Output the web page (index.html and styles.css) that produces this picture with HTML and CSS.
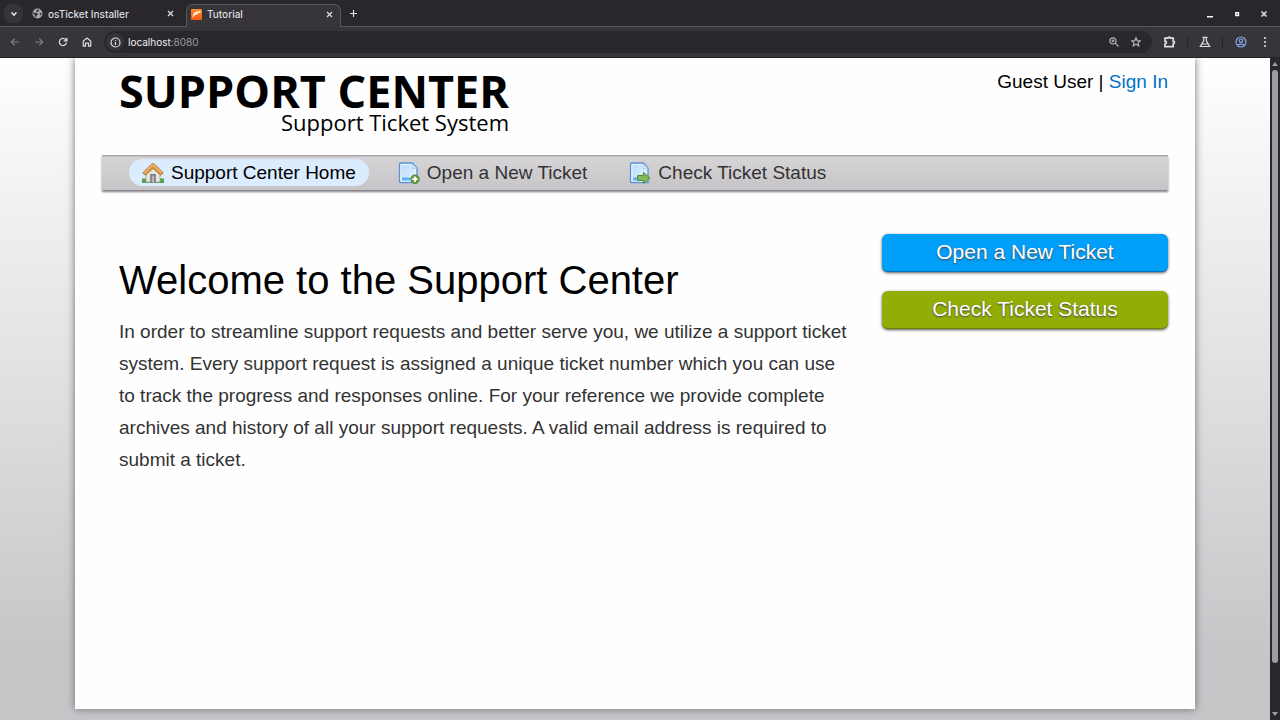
FILE: index.html
```html
<!DOCTYPE html>
<html lang="en">
<head>
<meta charset="utf-8">
<title>Tutorial</title>
<link rel="stylesheet" href="styles.css">
</head>
<body>
<div class="browser">
  <header class="tabstrip">
    <button class="tab-search" aria-label="Search tabs"><svg width="8" height="8" viewBox="0 0 8 8"><path d="M1.500 2.500 4 5l2.500-2.500" class="line bold"/></svg></button>
    <div class="tab">
      <svg width="11" height="11" viewBox="0 0 11 11"><circle cx="5.500" cy="5.500" r="5" fill="#a4a7b1"/><path d="M1.200 4.200 3.500 5l2 .2.500 1.300-1.500 1-.5 1.700-1-.4-.5-2.300-1.500-1zM5.200 1.500l2 .5-.4 1.300-1.400.2-.5.8-1-.5zM7.500 5.200l1.800-.5.200 1.800-1 1z" fill="#343237"/></svg>
      <span class="tab-title">osTicket Installer</span>
      <button class="tab-close" aria-label="Close osTicket Installer"><svg width="7" height="7" viewBox="0 0 7 7"><path d="m1 1 5 5M6 1 1 6" class="line"/></svg></button>
    </div>
    <div class="tab active">
      <svg width="11" height="11" viewBox="0 0 11 11"><defs><linearGradient id="fav" x2="0" y2="1"><stop stop-color="#ff8b2d"/><stop offset="1" stop-color="#f25a12"/></linearGradient></defs><rect width="11" height="11" rx="1" fill="url(#fav)"/><path d="M1.500 9C1.500 5.500 2.500 3.500 5 2.700L9.500 1.700 9.700 3.500 7.500 4.200 6.300 4.300 6.500 5.500 4.500 5.700C3 6.200 2.500 7.500 1.500 9z" fill="#fff0df"/></svg>
      <span class="tab-title">Tutorial</span>
      <button class="tab-close" aria-label="Close Tutorial"><svg width="7" height="7" viewBox="0 0 7 7"><path d="m1 1 5 5M6 1 1 6" class="line"/></svg></button>
    </div>
    <button class="new-tab" aria-label="New tab"><svg width="9" height="9" viewBox="0 0 9 9"><path d="M4.500 1v7M1 4.500h7" class="line"/></svg></button>
    <div class="window-controls">
      <button aria-label="Minimize"><svg width="8" height="8" viewBox="0 0 8 8"><path d="M1 6h6v1.500H1z" fill="#fff"/></svg></button>
      <button aria-label="Maximize"><svg width="8" height="8" viewBox="0 0 8 8"><path d="M2.800 2.800h2.700v2.700H2.800z" fill="none" stroke="#fff" stroke-width="1.400"/></svg></button>
      <button aria-label="Close window"><svg width="8" height="8" viewBox="0 0 8 8"><path d="m1.500 1.500 5 5m0-5-5 5" class="line bold"/></svg></button>
    </div>
  </header>
  <nav class="toolbar" aria-label="Browser">
    <div class="history">
      <button class="dim" aria-label="Back"><svg width="10" height="10" viewBox="0 0 10 10"><path d="M9 5H1.500M4.700 1.700 1.400 5l3.300 3.300" class="line"/></svg></button>
      <button class="dim" aria-label="Forward"><svg width="10" height="10" viewBox="0 0 10 10"><path d="M1 5h7.500M5.300 1.700 8.600 5 5.300 8.300" class="line"/></svg></button>
      <button aria-label="Reload"><svg width="10" height="10" viewBox="0 0 10 10"><path d="M8.500 5.600A3.600 3.600 0 1 1 7.800 2.700L8.700 3.700M8.800.8v3.100H5.700" class="line"/></svg></button>
      <button aria-label="Home"><svg width="10" height="10" viewBox="0 0 10 10"><path d="M1.300 9.200V4.100L5 1l3.700 3.100v5.100H6.500V6.200h-3v3z" class="line"/></svg></button>
    </div>
    <div class="address">
      <button class="site-info" aria-label="Site information"><svg width="11" height="11" viewBox="0 0 11 11"><circle cx="5.500" cy="5.500" r="4.500" class="line"/><path d="M5.500 5v3M5.500 2.900v1.200" class="line"/></svg></button>
      <a class="url" href="#">localhost<span>:8080</span></a>
      <button aria-label="Zoom"><svg width="10" height="10" viewBox="0 0 10 10"><circle cx="3.900" cy="3.900" r="3.100" class="line"/><path d="m6.200 6.200 3.300 3.300M3.900 2.500v2.800M2.500 3.900h2.800" class="line"/></svg></button>
      <button aria-label="Bookmark"><svg width="10" height="10" viewBox="0 0 10 10"><path d="m5 .8 1.200 2.800 3.100.3-2.300 2 .7 3L5 7.300 2.300 8.900l.7-3-2.300-2 3.100-.3z" class="line"/></svg></button>
    </div>
    <div class="tools">
      <button aria-label="Extensions"><svg width="12" height="12" viewBox="0 0 12 12"><path d="M1 2.200h3a1.200 1.200 0 0 1 2.400 0h2.800v2.900a1.300 1.300 0 0 1 0 2.600v3H1V7.900a1.300 1.300 0 0 0 0-2.800z" class="line bold"/></svg></button>
      <i></i>
      <button aria-label="Labs"><svg width="12" height="12" viewBox="0 0 12 12"><path d="M3.500 1.300h5M4.700 1.300v3.500L1.300 10.500h9.400L7.300 4.800V1.300M3 8h6" class="line"/></svg></button>
      <i></i>
      <button class="profile" aria-label="Profile"><svg width="12" height="12" viewBox="0 0 12 12"><circle cx="6" cy="6" r="5" class="line"/><circle cx="6" cy="4.700" r="1.700" class="line"/><path d="M2.500 9.300Q6 6.800 9.500 9.300" class="line"/></svg></button>
      <button aria-label="Menu"><svg width="4" height="12" viewBox="0 0 4 12"><g fill="#dedde0"><circle cx="2" cy="2" r="1.100"/><circle cx="2" cy="6" r="1.100"/><circle cx="2" cy="10" r="1.100"/></g></svg></button>
    </div>
  </nav>
  <div class="viewport">
    <div class="page">
      <div class="container">
        <header class="site-header">
          <a class="logo" href="#"><span class="logo-name">SUPPORT CENTER</span><span class="logo-tag">Support Ticket System</span></a>
          <p class="user">Guest User | <a href="#">Sign In</a></p>
        </header>
        <nav class="site-nav" aria-label="Support center">
          <a class="current" href="#"><svg width="22" height="20" viewBox="0 0 22 20"><path d="M0 16.500q1-2 3-1l16 0q2-1 3 1V20H0z" fill="#52a248"/><path d="M4 9 11 3l7 6v10H4z" fill="#e8e5df" stroke="#a7a39d" stroke-width=".7"/><path d="M8.200 11h5.600v8.500H8.200z" fill="#77777c"/><path d="M9.700 12.500h2.600v7H9.700z" fill="#b7b7ba"/><path d="m.7 10 8.300-8.500q2-1.600 4 0l8.300 8.500-2.600 2.300L11 5.500l-7.700 6.800z" fill="#d79445" stroke="#a96e30" stroke-width=".8"/><path d="m2.500 10 7.400-7.500h2.200L19.500 10" fill="none" stroke="#efb66d" stroke-width="1.500"/></svg>Support Center Home</a>
          <a href="#"><svg width="22" height="22" viewBox="0 0 22 22"><defs><linearGradient id="doc" x2="1" y2="1"><stop stop-color="#b4d9fb"/><stop offset="1" stop-color="#eaf6ff"/></linearGradient></defs><path d="M2.500 1h12L19 6V20.500H2.500q-1 0-1-1V2q0-1 1-1z" fill="url(#doc)" stroke="#5d93d0" stroke-width="1.300"/><path d="M3 2.500h10.500v4.500h4v12H3z" fill="none" stroke="#e8f4ff"/><path d="M14 1.500q1 2 0 5 3-1 5 0z" fill="#eff7ff" stroke="#8bb9e4" stroke-width=".8"/><path d="M4 15.500h8v3H4z" fill="#56b2ff"/><circle cx="17" cy="17.200" r="4.200" fill="#6ca142" stroke="#47802f"/><path d="M17 14.500v5.400m-2.700-2.700h5.400" stroke="#fff" stroke-width="1.700"/></svg>Open a New Ticket</a>
          <a href="#"><svg width="22" height="22" viewBox="0 0 22 22"><path d="M2.500 1h12L19 6V20.500H2.500q-1 0-1-1V2q0-1 1-1z" fill="url(#doc)" stroke="#5d93d0" stroke-width="1.300"/><path d="M3 2.500h10.500v4.500h4v12H3z" fill="none" stroke="#e8f4ff"/><path d="M14 1.500q1 2 0 5 3-1 5 0z" fill="#eff7ff" stroke="#8bb9e4" stroke-width=".8"/><path d="M4 15.500h5v3H4z" fill="#56b2ff"/><path d="M8.500 13.500h6v-3l6.500 5.500-6.500 5.500v-3h-6z" fill="#82b859" stroke="#518b39"/></svg>Check Ticket Status</a>
        </nav>
        <main class="landing">
          <section class="welcome">
            <h1>Welcome to the Support Center</h1>
            <p>In order to streamline support requests and better serve you, we utilize a support ticket system. Every support request is assigned a unique ticket number which you can use to track the progress and responses online. For your reference we provide complete archives and history of all your support requests. A valid email address is required to submit a ticket.</p>
          </section>
          <aside class="actions">
            <a class="blue" href="#">Open a New Ticket</a>
            <a class="green" href="#">Check Ticket Status</a>
          </aside>
        </main>
      </div>
    </div>
    <div class="scrollbar" aria-hidden="true">
      <svg width="6" height="4" viewBox="0 0 6 4"><path d="M0 4 3 0l3 4z" fill="#9f9da2"/></svg>
      <div class="thumb"></div>
      <svg width="6" height="4" viewBox="0 0 6 4"><path d="m0 0 3 4 3-4z" fill="#9f9da2"/></svg>
    </div>
  </div>
</div>
</body>
</html>
```
FILE: styles.css
```css
* { box-sizing: border-box; }
body { margin: 0; font-family: "Liberation Sans", Arial, sans-serif; }
button { display: flex; align-items: center; justify-content: center; margin: 0; padding: 0; border: 0; background: none; color: #dedde0; }
a { text-decoration: none; }
svg { display: block; flex: none; }
.line { fill: none; stroke: currentColor; stroke-width: 1.2; }
.bold { stroke-width: 1.7; }

.browser { display: flex; flex-direction: column; height: 100vh; overflow: hidden; }
.tabstrip { display: flex; height: 27px; flex: none; padding: 4px 8px 0 4px; background: #29272b; box-shadow: inset 0 -1px #59575c; font: 500 10px Inter, sans-serif; color: #dedde0; }
.tab-search { width: 19px; height: 19px; border-radius: 7px; background: #363439; }
.tab { display: flex; align-items: center; gap: 5px; width: 163px; height: 19px; padding: 0 12px 0 9px; }
.tab-title { flex: 1; white-space: nowrap; }
.tab.active { width: 155px; height: 23px; padding: 0 7px 4px 4px; border: 1px solid #59575c; border-bottom: 0; border-radius: 7px 7px 0 0; background: #37353a; }
.new-tab { width: 24px; height: 19px; }
.window-controls { display: flex; gap: 11px; margin-left: auto; height: 19px; }
.window-controls button { width: 16px; }

.toolbar { display: flex; align-items: center; height: 31px; flex: none; padding: 0 13px 0 9px; border-bottom: 1px solid #232126; background: #37353a; }
.history { display: flex; gap: 12px; }
.history button { width: 12px; }
.history .dim { color: #817f84; }
.address { display: flex; align-items: center; gap: 12px; flex: 1; height: 22px; margin-left: 11px; padding: 0 11px 0 2px; border-radius: 11px; background: #2a282c; color: #dedde0; }
.address button { color: #b5b3b8; }
.address .site-info { width: 18px; height: 18px; border-radius: 9px; background: #37353a; color: #dedde0; }
.url { flex: 1; margin-left: -8px; color: #eeeef0; font: 10px Inter, sans-serif; }
.url span { color: #9d9ba0; }
.tools { display: flex; align-items: center; gap: 11px; margin-left: 12px; }
.tools i { width: 1px; height: 10px; background: #242226; }
.tools .profile { margin: 0 5px 0 1px; color: #86a9e8; }

.viewport { display: flex; flex: 1; min-height: 0; }
.page { display: flex; flex: 1; padding: 0 75px 11px; background: linear-gradient(#fff, #c8c5c9 90%); }
.container { flex: 1; padding: 0 27px; background: #fefefe; box-shadow: 0 0 8px #706d73; clip-path: inset(0 -12px -12px); }
.site-header { display: flex; justify-content: space-between; height: 97px; padding: 13px 0 0 17px; }
.logo { display: flex; flex-direction: column; align-items: flex-end; color: #000; font-family: "Open Sans", sans-serif; }
.logo-name { font-size: 45px; line-height: 40px; font-weight: 700; }
.logo-tag { font-size: 22px; line-height: 22px; font-weight: 400; }
.user { margin: 0; font-size: 19px; line-height: 22px; }
.user a { color: #0072c6; }
.site-nav { display: flex; gap: 16px; height: 35px; padding: 3px 27px; border-top: 1px solid #aaa8ab; background: linear-gradient(#d8d5d9, #c7c4c8); box-shadow: 0 2px 2px #827f84, inset 0 1px #c0bdc1; }
.site-nav a { display: flex; align-items: center; gap: 7px; height: 27px; padding: 0 13px; border-radius: 14px; color: #333; font-size: 19px; }
.site-nav .current { background: #dbecff; color: #000; }
.landing { display: flex; justify-content: space-between; }
.welcome { flex: 0 1 748px; padding: 67px 0 0 17px; }
h1 { margin: 0; font-size: 40px; line-height: 46px; font-weight: 400; color: #000; }
.welcome p { margin: 13px 0 0; color: #333; font-size: 19px; line-height: 32px; }
.actions { display: flex; flex-direction: column; gap: 19px; width: 286px; padding-top: 44px; }
.actions a { height: 38px; border-radius: 6px; color: #fff; font-size: 21px; line-height: 36px; text-align: center; text-shadow: 0 1px 2px #444; box-shadow: 0 1px 3px #555; }
.actions .blue { background: #009ffa; border-bottom: 1px solid #0076bc; }
.actions .green { background: #92ad05; border-bottom: 1px solid #6c8200; }
.scrollbar { display: flex; flex-direction: column; align-items: center; width: 10px; padding: 4px 0; background: #2a282c; }
.thumb { width: 6px; flex: 0 1 593px; margin: 4px 0 auto; border-radius: 3px; background: #9f9da2; }
```
